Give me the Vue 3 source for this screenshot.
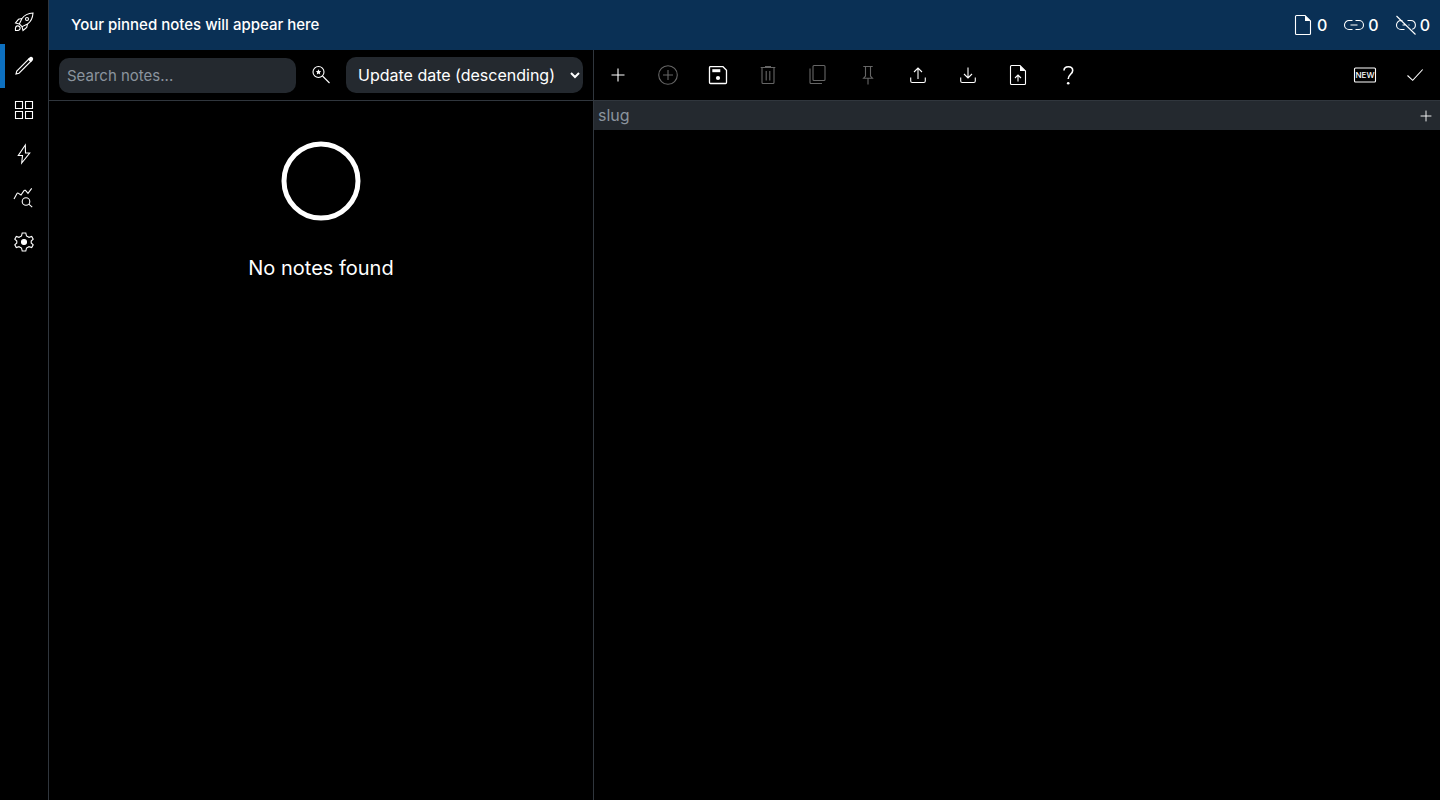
<script setup>
import { ref } from 'vue'

const query = ref('')
const slug = ref('')
const sort = ref('updateDateDescending')

const icons = {
  rocket: '<path d="M21 3c-5 .3-8.600 2-11 5.500L7.300 14l2.700 2.700 5.500-2.700C19 11.600 20.700 8 21 3z"/><path d="M10 8.500l-3.500.8L3.500 13l3.800 1M15.500 14l-.8 3.500L11 20.500l-1-3.800"/><circle cx="15" cy="9" r="1.500"/><path d="M3.500 20.500c-.3-2.500.3-4.300 1.800-4.600 1.800-.3 3.100 1 2.800 2.700-.3 1.500-2.100 2.100-4.600 1.900z"/>',
  pencil: '<path d="M4 20l.8-3L17 4.800l2.200 2.200L7 19.200z"/><path class="solid" d="M16.500 5.300l1.700-1.700q1.200-.6 2 .2t.2 2l-1.700 1.700z"/>',
  grid: '<path d="M3.500 3.500h7v7h-7zM13.500 3.500h7v7h-7zM3.500 13.500h7v7h-7zM13.500 13.500h7v7h-7z"/>',
  bolt: '<path d="M13.300 3L6.300 13.500h4.200L9.700 21l8-10h-4.200z"/>',
  chart: '<path d="M2 13l3-5.500q.7-1 1.600-.2t2.400 1.700l3-4.300q.8-1 1.700-.1L16 7.300l3.700-5"/><circle cx="14" cy="15.500" r="3.800"/><path d="M16.800 18.200l3.400 3"/>',
  gear: '<path d="M10.200 3h3.600l.7 3L17 7.300l2.700-.9 1.500 2.800L19.200 11v2l2 1.800-1.500 2.800-2.700-.9-2.500 1.300-.7 3h-3.600l-.7-3L7 16.700l-2.700.9-1.500-2.800L4.800 13v-2l-2-1.800 1.500-2.800 2.700.9L9.500 6z"/><circle class="solid" cx="12" cy="12" r="2.500"/>',
  searchStar: '<circle cx="9.500" cy="9" r="5.500"/><path d="M13.500 13l7 7"/><path class="fill" d="M9.500 6.300l.8 1.800 1.900.2-1.400 1.300.4 2-1.700-1-1.700 1 .4-2-1.400-1.300 1.900-.2z"/>',
  plus: '<path d="M12 5.500v13M5.500 12h13"/>',
  circlePlus: '<circle cx="12" cy="12" r="9.300"/><path d="M12 7v10M7 12h10"/>',
  save: '<path stroke-width="1.300" d="M4.500 3.700H17l3.500 3.500v12.300q0 1-1 1h-15q-1 0-1-1v-15q0-.8 1-.8z"/><path class="fill" d="M6.300 6.200h8v3h-8z"/><circle class="fill" cx="12" cy="15" r="2.100"/>',
  trash: '<path d="M4.700 4.500h14.600M9 3.500h6M6 4.500v15q0 1 1 1h10q1 0 1-1v-15M10.200 8v9.500M13.800 8v9.500"/>',
  copy: '<rect x="7" y="2.500" width="12" height="15" rx="1"/><path d="M4 5.500v14q0 1 1 1H16"/>',
  pin: '<path d="M7.300 3.500h9.400M9.500 3.500v9.500l-2 2.300h9L14.500 13V3.500M12 15.500v6"/>',
  upload: '<path d="M12 16V5M8 9l4-4 4 4M4.700 14.500v3.500q0 1.500 1.500 1.500h11.600q1.500 0 1.500-1.500v-3.500"/>',
  download: '<path d="M12 4.500V15M8 11l4 4 4-4M4.700 14.500v3.500q0 1.500 1.500 1.500h11.600q1.500 0 1.500-1.500v-3.500"/>',
  fileUp: '<path d="M5.500 2.500H14l5.500 5.500v12.500q0 1-1 1h-13q-1 0-1-1v-17q0-1 1-1z"/><path class="fill" d="M14 2.500L19.500 8H14z"/><path d="M12 18.500V12M9 15l3-3 3 3"/>',
  help: '<path stroke-width="1.600" d="M8 7.500C8 5 9.800 3.700 12.400 3.700s4.300 1.400 4.300 3.700c0 3.800-4.500 4-4.500 8.600"/><circle class="fill" cx="12.200" cy="20.300" r="1.300"/>',
  check: '<path d="M4.500 12.500l5.200 4.800L19.700 6.500"/>',
  file: '<path d="M5.500 2.500H14l5.500 5.500v12.500q0 1-1 1h-13q-1 0-1-1v-17q0-1 1-1z"/><path class="fill" d="M14 2.500L19.500 8H14z"/>',
  link: '<path d="M10.500 7.500H7a4.500 4.500 0 0 0 0 9h3.500M13.500 7.500H17a4.500 4.500 0 0 1 0 9h-3.500M8.500 12h7"/>',
  unlink: '<path d="M8.500 7.500H7a4.500 4.500 0 0 0 0 9h3.500M13.500 7.500H17a4.500 4.500 0 0 1 1.200 8.800M8.500 12h2.500M14.500 12h1M2.500 3l19 18.500"/>'
}

const nav = [
  { icon: 'rocket', label: 'Home' },
  { icon: 'pencil', label: 'Editor', active: true },
  { icon: 'grid', label: 'List' },
  { icon: 'bolt', label: 'Files' },
  { icon: 'chart', label: 'Stats' },
  { icon: 'gear', label: 'Settings' }
]
const stats = [
  { icon: 'file', label: 'Notes', value: 0 },
  { icon: 'link', label: 'Links', value: 0 },
  { icon: 'unlink', label: 'Unlinked notes', value: 0 }
]
const actions = [
  { icon: 'plus', label: 'New note' },
  { icon: 'circlePlus', label: 'Duplicate', disabled: true },
  { icon: 'save', label: 'Save' },
  { icon: 'trash', label: 'Remove', disabled: true },
  { icon: 'copy', label: 'Copy', disabled: true },
  { icon: 'pin', label: 'Pin', disabled: true },
  { icon: 'upload', label: 'Upload' },
  { icon: 'download', label: 'Download' },
  { icon: 'fileUp', label: 'Import' },
  { icon: 'help', label: 'Random note' }
]
</script>

<template>
  <div class="app">
    <nav class="sidebar">
      <a v-for="item in nav" :key="item.icon" href="#" :class="{ active: item.active }" :aria-label="item.label">
        <svg class="icon" viewBox="0 0 24 24" v-html="icons[item.icon]"></svg>
      </a>
    </nav>
    <div class="content">
      <header class="header">
        <p>Your pinned notes will appear here</p>
        <div class="stats">
          <span v-for="s in stats" :key="s.icon" class="stat" :title="s.label">
            <svg class="icon" viewBox="0 0 24 24" v-html="icons[s.icon]"></svg>{{ s.value }}
          </span>
        </div>
      </header>
      <main class="panes">
        <section class="list">
          <div class="search">
            <input v-model="query" type="search" placeholder="Search notes..." aria-label="Search notes">
            <button type="button" aria-label="Search presets">
              <svg class="icon" viewBox="0 0 24 24" v-html="icons.searchStar"></svg>
            </button>
            <div class="select">
              <select v-model="sort" aria-label="Sort notes">
                <option value="updateDateDescending">Update date (descending)</option>
              </select>
              <svg class="arrow" viewBox="0 0 12 12"><path d="M2 4l4 4 4-4" /></svg>
            </div>
          </div>
          <div class="empty">
            <svg viewBox="0 0 80 80"><circle cx="40" cy="40" r="37" /></svg>
            <p>No notes found</p>
          </div>
        </section>
        <section class="editor">
          <div class="toolbar">
            <button v-for="a in actions" :key="a.icon" type="button" :disabled="a.disabled" :aria-label="a.label">
              <svg class="icon" viewBox="0 0 24 24" v-html="icons[a.icon]"></svg>
            </button>
            <span class="spacer"></span>
            <span class="status" title="New note">
              <svg class="icon" viewBox="0 0 24 24">
                <rect x="1.500" y="5" width="21" height="14" rx="1" />
                <text x="12" y="15" text-anchor="middle">NEW</text>
              </svg>
            </span>
            <span class="status" title="No unsaved changes">
              <svg class="icon" viewBox="0 0 24 24" v-html="icons.check"></svg>
            </span>
          </div>
          <div class="slug">
            <input v-model="slug" type="text" placeholder="slug" aria-label="slug">
            <button type="button" aria-label="Add slug">
              <svg class="icon small" viewBox="0 0 24 24" v-html="icons.plus"></svg>
            </button>
          </div>
        </section>
      </main>
    </div>
  </div>
</template>

<style>
body {
  background: #000;
}
</style>

<style scoped>
.app {
  display: flex;
  min-height: 100vh;
  background: #000;
  color: #fff;
  font: 400 16px/20px Inter, "Liberation Sans", sans-serif;
}
.app * {
  box-sizing: border-box;
}
p {
  margin: 0;
}
button {
  display: flex;
  align-items: center;
  justify-content: center;
  padding: 0;
  border: 0;
  background: none;
  color: inherit;
}
button:disabled {
  color: #666;
}
input,
select {
  min-width: 0;
  width: 100%;
  border: 0;
  outline: 0;
  background: #24292f;
  color: #fff;
  font: inherit;
}
input::placeholder {
  color: #8b949e;
  opacity: 1;
}
.icon {
  display: block;
  flex: none;
  width: 24px;
  height: 24px;
  fill: none;
  stroke: currentColor;
  stroke-width: 1.1;
}
.icon :deep(.fill) {
  fill: currentColor;
  stroke: none;
}
.icon :deep(.solid) {
  fill: currentColor;
}
.icon text {
  fill: currentColor;
  stroke: none;
  font-size: 8px;
  font-weight: 500;
}
.small {
  width: 20px;
  height: 20px;
}
.sidebar {
  flex: none;
  width: 49px;
  border-right: 1px solid #30363d;
}
.sidebar a {
  display: flex;
  align-items: center;
  justify-content: center;
  height: 44px;
  position: relative;
  color: #fff;
}
.active::before {
  content: "";
  position: absolute;
  inset: 0 auto 0 0;
  width: 5px;
  background: #0d70c0;
}
.content {
  flex: 1;
  min-width: 0;
  display: flex;
  flex-direction: column;
}
.header {
  display: flex;
  align-items: center;
  justify-content: space-between;
  height: 50px;
  padding: 0 10px 0 22px;
  background: #0a3055;
  font-weight: 500;
}
.header p {
  font-size: 15px;
}
.stats {
  display: flex;
  gap: 15px;
}
.stat {
  display: flex;
  align-items: center;
  gap: 2px;
}
.panes {
  flex: 1;
  display: grid;
  grid-template-columns: 544fr 847fr;
}
.list {
  min-width: 0;
}
.search {
  display: grid;
  grid-template-columns: 1fr 50px 1fr;
  align-items: center;
  height: 51px;
  padding: 0 10px;
  border-bottom: 1px solid #30363d;
}
.search input {
  height: 35px;
  padding: 0 8px;
  border-radius: 10px;
  appearance: none;
  font-size: 15px;
}
.select {
  position: relative;
}
.select select {
  display: block;
  height: 36px;
  padding: 0 20px 0 12px;
  border-radius: 10px;
  appearance: none;
}
.arrow {
  position: absolute;
  right: 2px;
  top: 12px;
  width: 12px;
  height: 12px;
  fill: none;
  stroke: #fff;
  stroke-width: 2;
  pointer-events: none;
}
.empty {
  display: flex;
  flex-direction: column;
  align-items: center;
  gap: 32px;
  padding-top: 40px;
  font-size: 20px;
  line-height: 30px;
}
.empty svg {
  width: 80px;
  height: 80px;
  fill: none;
  stroke: #fff;
  stroke-width: 5;
}
.editor {
  position: relative;
  min-width: 0;
}
.editor::before {
  content: "";
  position: absolute;
  inset: 0 auto 0 0;
  width: 1px;
  background: #30363d;
}
.toolbar {
  display: flex;
  height: 51px;
  border-bottom: 1px solid #30363d;
}
.toolbar button,
.status {
  display: flex;
  align-items: center;
  justify-content: center;
  width: 50px;
}
.spacer {
  flex: 1;
}
.slug {
  display: flex;
  height: 29px;
  background: #24292f;
}
.slug input {
  flex: 1;
  height: 28px;
  padding: 0 5px;
}
.slug button {
  width: 28px;
}
</style>
